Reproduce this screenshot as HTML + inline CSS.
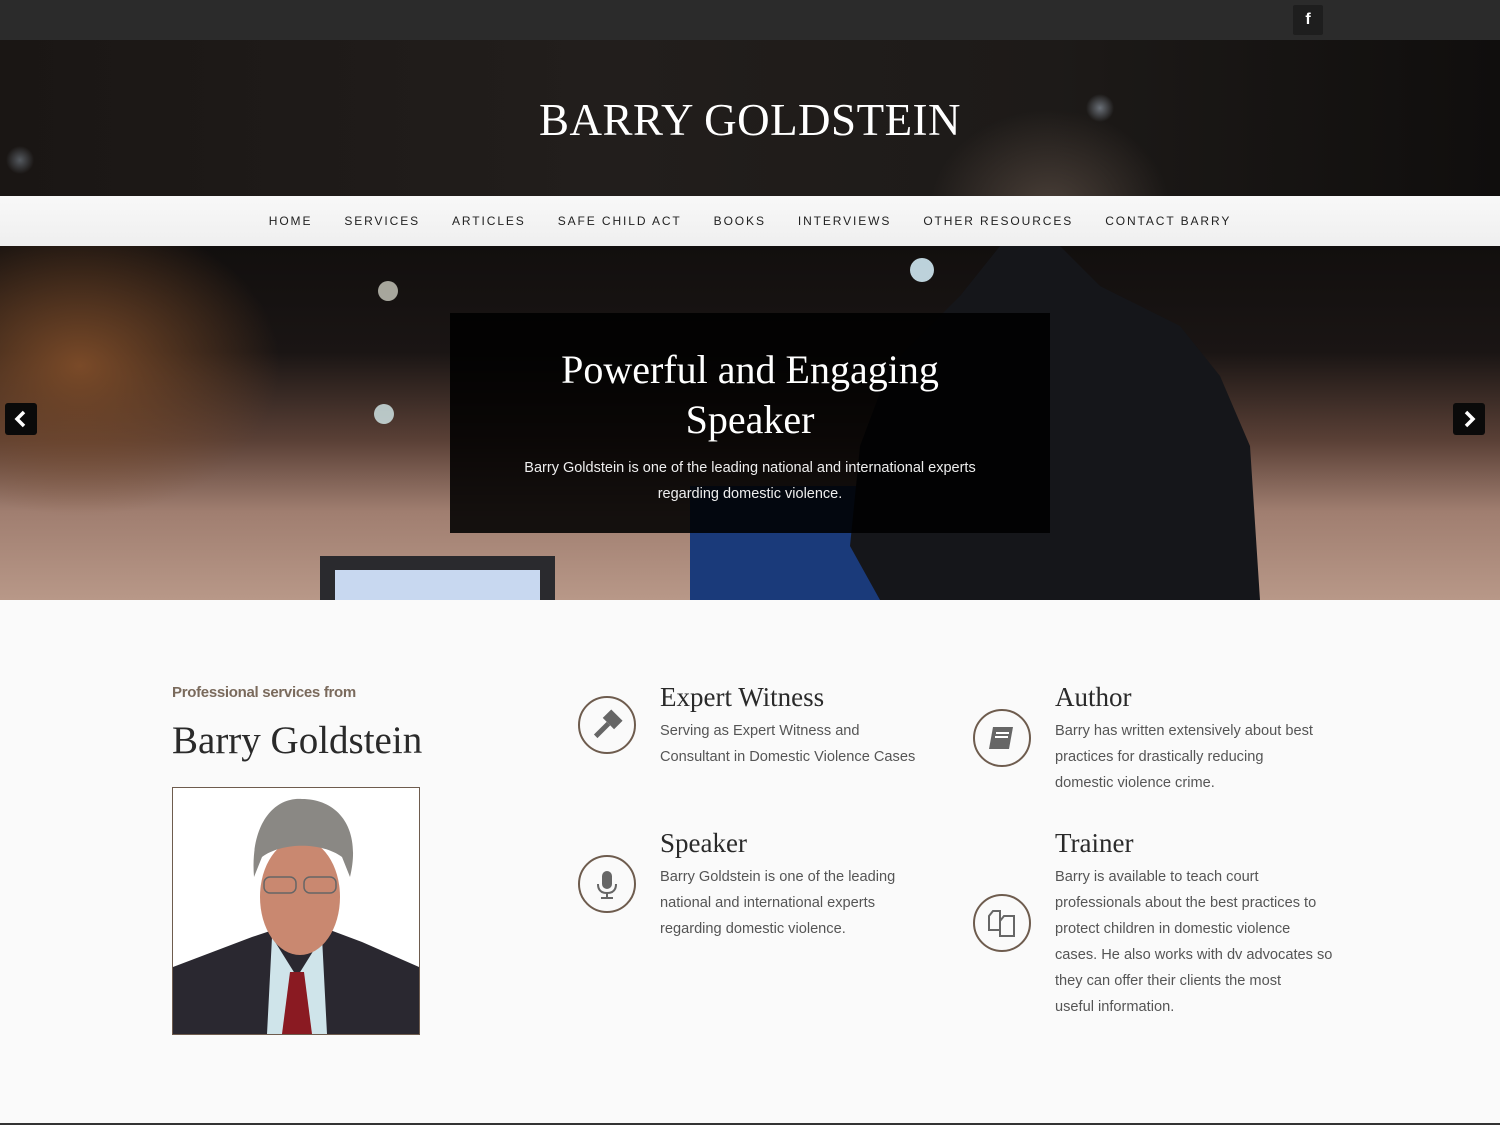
<!DOCTYPE html>
<html><head><meta charset="utf-8"><style>
*{margin:0;padding:0;box-sizing:border-box}
body{width:1500px;height:1125px;background:#fafafa;font-family:"Liberation Sans",sans-serif;overflow:hidden;position:relative}
.top{height:40px;background:#2b2b2b;position:relative}
.fb{position:absolute;left:1293px;top:5px;width:30px;height:30px;background:#1e1e1e;border-radius:2px;color:#fff;font-weight:bold;font-size:16px;text-align:center;line-height:30px}
.head{height:156px;position:relative;background:radial-gradient(ellipse 120px 100px at 1050px 170px,#4a3f38,transparent),radial-gradient(circle 14px at 1100px 68px,#6a7078,transparent),radial-gradient(circle 14px at 20px 120px,#555a60,transparent),linear-gradient(90deg,#1a1614,#221e1c 40%,#1d1a18 70%,#100e0d);}
.head h1{position:absolute;left:0;right:0;top:54px;text-align:center;color:#fff;font-family:"Liberation Serif",serif;font-weight:normal;font-size:45px;letter-spacing:0.5px}
.nav{height:50px;background:linear-gradient(#f8f8f8,#efefef);text-align:center;font-size:12px;letter-spacing:1.9px;color:#222;line-height:50px}
.nav span{margin:0 16px}
.slide{height:354px;position:relative;overflow:hidden;background:
radial-gradient(ellipse 200px 150px at 80px 120px,#7a4a28,transparent),
linear-gradient(180deg,#120f0e 0%,#1a1514 30%,#5a4036 55%,#a07e70 75%,#b89888 100%);}
.caption{position:absolute;left:450px;top:67px;width:600px;height:220px;background:rgba(0,0,0,.88);text-align:center;color:#fff}
.caption h2{font-family:"Liberation Serif",serif;font-weight:normal;font-size:40px;line-height:50px;margin-top:32px}
.caption p{font-size:14.5px;line-height:26px;margin-top:10px;color:#eee}
.arr{position:absolute;top:157px;width:32px;height:32px;background:#0a0a0a;border-radius:3px}
.sec h3{font-family:"Liberation Serif",serif;font-weight:normal;font-size:27px;color:#2a2a2a;position:absolute}
.sec p{position:absolute;font-size:14.6px;line-height:26px;color:#555}
.ic{position:absolute;width:58px;height:58px;border:2px solid #6e5c4e;border-radius:50%}
</style></head><body>
<div class="top"><div class="fb">f</div></div>
<div class="head"><h1>BARRY GOLDSTEIN</h1></div>
<div class="nav"><span>HOME</span><span>SERVICES</span><span>ARTICLES</span><span>SAFE CHILD ACT</span><span>BOOKS</span><span>INTERVIEWS</span><span>OTHER RESOURCES</span><span>CONTACT BARRY</span></div>
<div class="slide">
<svg width="1500" height="354" style="position:absolute;left:0;top:0">
<circle cx="922" cy="24" r="12" fill="#cfe8f2" opacity=".9"/><circle cx="388" cy="45" r="10" fill="#e6e6d8" opacity=".7"/><circle cx="384" cy="168" r="10" fill="#d6ecee" opacity=".8"/>
<rect x="320" y="310" width="235" height="50" fill="#2a2a2e"/><rect x="335" y="324" width="205" height="30" fill="#c8d8f0"/>
<rect x="690" y="240" width="200" height="114" fill="#1a3a7a"/>
<path d="M1000 0 L1060 0 L1100 40 L1180 80 L1220 130 L1250 200 L1260 354 L880 354 L850 300 L860 200 L890 120 L960 50 Z" fill="#15161a"/>
</svg>
<div class="caption"><h2>Powerful and Engaging<br>Speaker</h2><p>Barry Goldstein is one of the leading national and international experts<br>regarding domestic violence.</p></div>
<div class="arr" style="left:5px"><svg width="32" height="32"><path d="M19 9 L12 16 L19 23" stroke="#fff" stroke-width="3.5" fill="none"/></svg></div>
<div class="arr" style="left:1453px"><svg width="32" height="32"><path d="M13 9 L20 16 L13 23" stroke="#fff" stroke-width="3.5" fill="none"/></svg></div>
</div>
<div class="sec">
<div style="position:absolute;left:172px;top:684px;font-size:15px;font-weight:bold;color:#7a6a5c;letter-spacing:-.3px">Professional services from</div>
<div style="position:absolute;left:172px;top:718px;font-family:'Liberation Serif',serif;font-size:39px;color:#2a2a2a">Barry Goldstein</div>
<svg style="position:absolute;left:172px;top:787px" width="248" height="248">
<rect x="0.5" y="0.5" width="247" height="247" fill="#fff" stroke="#6e5c4e"/>
<path d="M1 180 L80 150 L110 140 L150 140 L190 155 L247 180 L247 247 L1 247Z" fill="#2a2830"/>
<path d="M100 150 L125 190 L150 150 L155 247 L95 247Z" fill="#cfe4ea"/>
<path d="M118 185 L132 185 L140 247 L110 247Z" fill="#8a1a22"/>
<ellipse cx="128" cy="110" rx="40" ry="58" fill="#c98870"/>
<path d="M82 90 C78 40 100 10 130 12 C165 12 190 40 178 90 L170 70 C150 55 110 55 90 70Z" fill="#8a8884"/>
<rect x="92" y="90" width="32" height="16" rx="6" fill="none" stroke="#666" stroke-width="1.5"/><rect x="132" y="90" width="32" height="16" rx="6" fill="none" stroke="#666" stroke-width="1.5"/>
</svg>
<div class="ic" style="left:578px;top:696px"><svg width="54" height="54"><g transform="rotate(45 27 27)"><rect x="19" y="13" width="16" height="12" fill="#666"/><rect x="24.5" y="25" width="5" height="18" fill="#666"/></g></svg></div>
<h3 style="left:660px;top:682px">Expert Witness</h3>
<p style="left:660px;top:718px">Serving as Expert Witness and<br>Consultant in Domestic Violence Cases</p>
<div class="ic" style="left:973px;top:709px"><svg width="54" height="54"><path d="M18 16 L38 16 L34 38 L14 38Z" fill="#666"/><rect x="21" y="21" width="13" height="2" fill="#fff"/><rect x="20" y="25" width="13" height="2" fill="#fff"/></svg></div>
<h3 style="left:1055px;top:682px">Author</h3>
<p style="left:1055px;top:718px">Barry has written extensively about best<br>practices for drastically reducing<br>domestic violence crime.</p>
<div class="ic" style="left:578px;top:855px"><svg width="54" height="54"><rect x="22" y="14" width="10" height="18" rx="5" fill="#666"/><path d="M18 27 Q18 36 27 36 Q36 36 36 27" stroke="#666" stroke-width="2" fill="none"/><path d="M27 36 V41 M21 41 H33" stroke="#666" stroke-width="2"/></svg></div>
<h3 style="left:660px;top:828px">Speaker</h3>
<p style="left:660px;top:864px">Barry Goldstein is one of the leading<br>national and international experts<br>regarding domestic violence.</p>
<div class="ic" style="left:973px;top:894px"><svg width="54" height="54" fill="none" stroke="#666" stroke-width="2"><path d="M14 20 L18 15 L25 15 L25 34 L14 34Z"/><path d="M25 25 L29 20 L39 20 L39 40 L25 40Z" fill="#fafafa"/></svg></div>
<h3 style="left:1055px;top:828px">Trainer</h3>
<p style="left:1055px;top:864px">Barry is available to teach court<br>professionals about the best practices to<br>protect children in domestic violence<br>cases. He also works with dv advocates so<br>they can offer their clients the most<br>useful information.</p>
</div>
<div style="position:absolute;left:0;top:1123px;width:1500px;height:2px;background:#333"></div>
</body></html>
